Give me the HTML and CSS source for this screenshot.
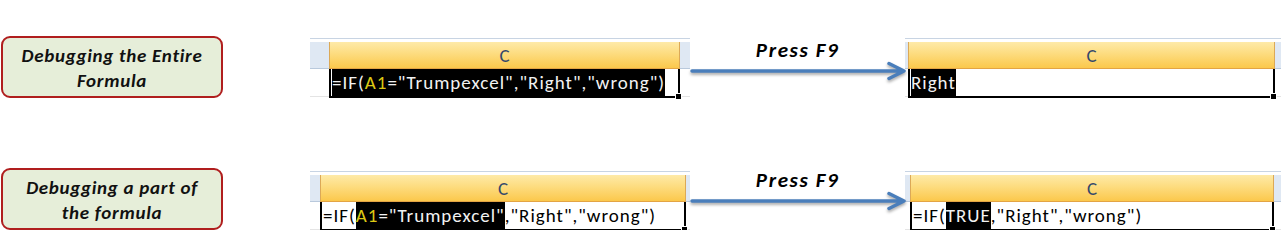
FILE: index.html
```html
<!DOCTYPE html>
<html>
<head>
<meta charset="utf-8">
<link rel="stylesheet" href="styles.css">
</head>
<body>
<div class="page">
  <div class="row">
    <div class="label">Debugging the Entire<br>Formula</div>
    <div class="sheet sheet-a">
      <div class="topline"></div>
      <div class="side"></div><div class="col">C</div><div class="side"></div>
      <div class="blank"></div>
      <div class="cell"><span class="hl">=IF(<span class="ref">A1</span>="Trumpexcel","Right","wrong")</span><span class="handle"></span></div>
      <div class="blank"></div>
    </div>
    <div class="step">
      <div class="press">Press F9</div>
      <svg class="arrow" width="218" height="20" viewBox="0 0 218 20">
        <path d="M2 10 H214 M199 2.5 L214 10 L199 17.5" fill="none" stroke="#4a7ebb" stroke-width="3.5" stroke-linecap="round" stroke-linejoin="round"/>
      </svg>
    </div>
    <div class="sheet sheet-b">
      <div class="topline"></div>
      <div class="side"></div><div class="col">C</div><div class="side"></div>
      <div class="blank"></div>
      <div class="cell"><span class="hl">Right</span><span class="handle"></span></div>
      <div class="blank"></div>
    </div>
  </div>

  <div class="row row-2">
    <div class="label">Debugging a part of<br>the formula</div>
    <div class="sheet sheet-c">
      <div class="topline"></div>
      <div class="side"></div><div class="col">C</div><div class="side"></div>
      <div class="blank"></div>
      <div class="cell">=IF(<span class="hl"><span class="ref">A1</span>="Trumpexcel"</span>,"Right","wrong")<span class="handle"></span></div>
      <div class="blank"></div>
    </div>
    <div class="step">
      <div class="press">Press F9</div>
      <svg class="arrow" width="218" height="20" viewBox="0 0 218 20">
        <path d="M2 10 H214 M199 2.5 L214 10 L199 17.5" fill="none" stroke="#4a7ebb" stroke-width="3.5" stroke-linecap="round" stroke-linejoin="round"/>
      </svg>
    </div>
    <div class="sheet sheet-d">
      <div class="topline"></div>
      <div class="side"></div><div class="col">C</div><div class="side"></div>
      <div class="blank"></div>
      <div class="cell">=IF(<span class="hl">TRUE</span>,"Right","wrong")<span class="handle"></span></div>
      <div class="blank"></div>
    </div>
  </div>
</div>
</body>
</html>
```
FILE: styles.css
```css
html, body {
  margin: 0;
  background: #ffffff;
}

body {
  font-family: Carlito, Lato, "Open Sans", sans-serif;
  color: #000;
}

.page {
  padding-top: 36px;
  display: flex;
  flex-direction: column;
  gap: 70px;
}

.row {
  display: flex;
  align-items: flex-start;
  height: 62px;
}

.label {
  margin-left: 1px;
  width: 222px;
  height: 62px;
  box-sizing: border-box;
  border: 2px solid #b01e1e;
  border-radius: 9px;
  background: #e6eed9;
  display: flex;
  align-items: center;
  justify-content: center;
  text-align: center;
  padding-top: 2px;
  font-size: 19px;
  line-height: 25px;
  font-weight: 700;
  font-style: italic;
  letter-spacing: 0.7px;
  color: #111;
}

.sheet {
  margin-left: 87px;
  width: 380px;
  display: grid;
  grid-template-columns: 19px 1fr 10px;
  grid-template-rows: auto 27px 29px;
}

.sheet-b, .sheet-d {
  margin-left: 0;
  width: 376px;
}

.sheet-b { grid-template-columns: 3px 1fr 6px; }
.sheet-c { grid-template-columns: 10px 1fr 4px; }
.sheet-d { grid-template-columns: 5px 1fr 7px; }

.row-2 .sheet { margin-top: 1px; }

.topline {
  grid-column: 1 / -1;
  height: 1px;
  margin-top: 2px;
  margin-bottom: 3px;
  background: #c8d4e3;
}

.side {
  background: #dfe8f3;
  border-bottom: 1px solid #b9c9dc;
}

.col {
  box-sizing: border-box;
  background: linear-gradient(#feeaa8 0%, #fddc7f 45%, #fbc84c 100%);
  border-left: 1px solid #dca957;
  border-right: 1px solid #dca957;
  border-bottom: 1px solid #e3a444;
  display: flex;
  align-items: center;
  justify-content: center;
  font-size: 19px;
  color: #33476b;
}

.blank {
  border-bottom: 1px solid #e4e4e4;
  margin-bottom: 1px;
}

.cell {
  position: relative;
  box-sizing: border-box;
  border: 2px solid #000;
  border-top: none;
  padding-left: 1px;
  font-size: 19px;
  line-height: 27px;
  letter-spacing: 1px;
  white-space: nowrap;
  color: #000;
}

.hl {
  display: inline-block;
  background: #000;
  color: #f2f2f2;
  line-height: 27px;
}

.ref {
  color: #dcc814;
}

.handle {
  position: absolute;
  right: -4px;
  bottom: -4px;
  width: 5px;
  height: 5px;
  background: #000;
  border: 1px solid #fff;
}

.step {
  width: 215px;
  display: flex;
  flex-direction: column;
  align-items: center;
  position: relative;
  z-index: 1;
}

.press {
  margin-top: 3px;
  font-size: 21px;
  line-height: 22px;
  font-weight: 700;
  font-style: italic;
  letter-spacing: 1.6px;
  color: #000;
}

.arrow {
  display: block;
  margin-top: 0;
  margin-left: 3px;
  overflow: visible;
  filter: drop-shadow(0 2px 1.5px rgba(0, 0, 0, 0.35));
}

.row-2 .press { margin-top: 1px; }
.row-2 .arrow { margin-top: 0; }
```
